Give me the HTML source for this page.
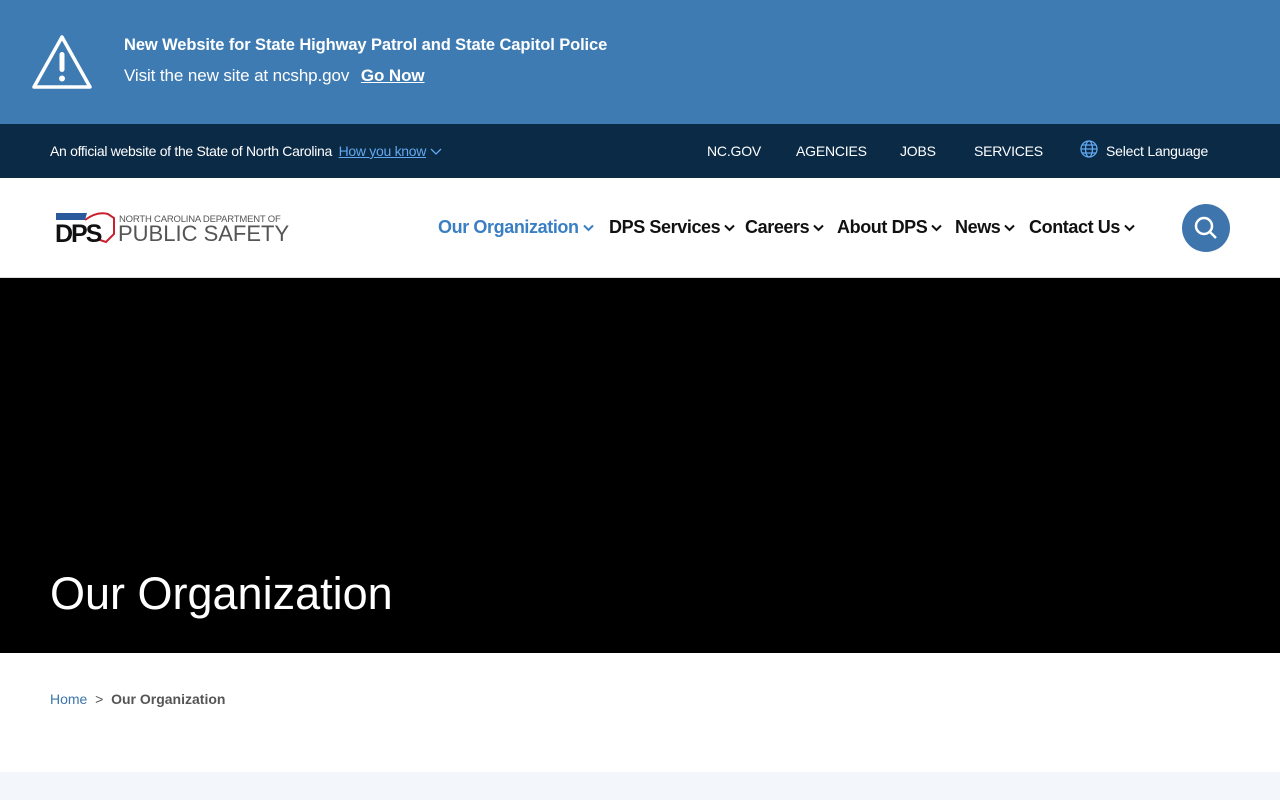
<!DOCTYPE html>
<html><head><meta charset="utf-8"><style>
*{margin:0;padding:0;box-sizing:border-box}
body{width:1280px;height:800px;overflow:hidden;font-family:"Liberation Sans",sans-serif;background:#fff}
.alert{position:absolute;top:0;left:0;width:1280px;height:124px;background:#3e7bb2;color:#fff}
.alert svg{position:absolute;left:31px;top:34px}
.a1{position:absolute;left:124px;top:36px;font-size:16.5px;font-weight:bold;letter-spacing:-.1px}
.a2{position:absolute;left:124px;top:66px;font-size:17px;letter-spacing:-.1px}
.a2 b{text-decoration:underline;margin-left:7px}
.top{position:absolute;top:124px;left:0;width:1280px;height:54px;background:#0b2a46;color:#fff;font-size:14px}
.top .l{position:absolute;left:50px;top:19px;letter-spacing:-.3px}
.top .l a{color:#62a8f0;text-decoration:underline;margin-left:3px}
.top .r{position:absolute;top:19px;font-size:14px;letter-spacing:-.2px}
.hdr{position:absolute;top:178px;left:0;width:1280px;height:100px;border-bottom:1px solid #ddd}
.nav{position:absolute;top:39px;font-size:18px;font-weight:bold;color:#111;letter-spacing:-.4px}
.nav span{position:absolute;white-space:nowrap;display:flex;align-items:center}
.nav svg{margin-left:4px}
.srch{position:absolute;left:1182px;top:26px;width:48px;height:48px;border-radius:50%;background:#3e75ac}
.hero{position:absolute;top:278px;left:0;width:1280px;height:375px;background:#000}
.hero h1{position:absolute;left:50px;top:290px;color:#fff;font-weight:normal;font-size:45px;letter-spacing:0}
.bc{position:absolute;top:691px;left:50px;font-size:14px;color:#555}
.bc a{color:#3e75ac}
.foot{position:absolute;top:772px;left:0;width:1280px;height:28px;background:#f3f7fc}
</style></head><body>
<div class="alert">
<svg width="62" height="56" viewBox="0 0 62 56"><path d="M31 3 L59 53 H3 Z" fill="none" stroke="#fff" stroke-width="3.5" stroke-linejoin="round"/><rect x="28.5" y="18" width="5" height="20" rx="2.5" fill="#fff"/><circle cx="31" cy="44.5" r="3" fill="#fff"/></svg>
<div class="a1">New Website for State Highway Patrol and State Capitol Police</div>
<div class="a2">Visit the new site at ncshp.gov <b>Go Now</b></div>
</div>
<div class="top">
<div class="l">An official website of the State of North Carolina <a>How you know</a> <svg width="12" height="8" viewBox="0 0 12 8"><path d="M1 1l5 5 5-5" fill="none" stroke="#62a8f0" stroke-width="1.3"/></svg></div>
<div class="r" style="left:707px">NC.GOV</div>
<div class="r" style="left:796px">AGENCIES</div>
<div class="r" style="left:900px">JOBS</div>
<div class="r" style="left:974px">SERVICES</div>
<svg style="position:absolute;left:1080px;top:16px" width="18" height="18" viewBox="0 0 18 18" fill="none" stroke="#62a8f0" stroke-width="1.3"><circle cx="9" cy="9" r="8"/><ellipse cx="9" cy="9" rx="3.5" ry="8"/><path d="M1 9h16M2.5 5h13M2.5 13h13"/></svg>
<div class="r" style="left:1106px">Select Language</div>
</div>
<div class="hdr">
<svg style="position:absolute;left:55px;top:34px" width="62" height="32" viewBox="0 0 62 32"><path d="M1 1 L32 1 L30 8 L1 8Z" fill="#2a5a9c"/><path d="M30 8 Q42 -1 53 2 L59 6 L59 22 L51 30 L42 27" fill="none" stroke="#c8202f" stroke-width="2"/><text x="0" y="30" font-family="Liberation Sans" font-weight="bold" font-size="25" fill="#111" letter-spacing="-2">DPS</text></svg>
<div style="position:absolute;left:119px;top:36px;font-size:9.5px;color:#555;letter-spacing:-.2px">NORTH CAROLINA DEPARTMENT OF</div>
<div style="position:absolute;left:118px;top:43px;font-size:22px;color:#555;letter-spacing:0">PUBLIC SAFETY</div>
<div class="nav">
<span style="left:438px;color:#3a7fc4">Our Organization<svg width="11" height="8" viewBox="0 0 11 8"><path d="M1 1.5l4.5 4.5 4.5-4.5" fill="none" stroke="#3a7fc4" stroke-width="2"/></svg></span>
<span style="left:609px">DPS Services<svg width="11" height="8" viewBox="0 0 11 8"><path d="M1 1.5l4.5 4.5 4.5-4.5" fill="none" stroke="#111" stroke-width="2"/></svg></span>
<span style="left:745px">Careers<svg width="11" height="8" viewBox="0 0 11 8"><path d="M1 1.5l4.5 4.5 4.5-4.5" fill="none" stroke="#111" stroke-width="2"/></svg></span>
<span style="left:837px">About DPS<svg width="11" height="8" viewBox="0 0 11 8"><path d="M1 1.5l4.5 4.5 4.5-4.5" fill="none" stroke="#111" stroke-width="2"/></svg></span>
<span style="left:955px">News<svg width="11" height="8" viewBox="0 0 11 8"><path d="M1 1.5l4.5 4.5 4.5-4.5" fill="none" stroke="#111" stroke-width="2"/></svg></span>
<span style="left:1029px">Contact Us<svg width="11" height="8" viewBox="0 0 11 8"><path d="M1 1.5l4.5 4.5 4.5-4.5" fill="none" stroke="#111" stroke-width="2"/></svg></span>
</div>
<div class="srch"><svg width="48" height="48" viewBox="0 0 48 48" fill="none" stroke="#fff" stroke-width="2.5"><circle cx="22" cy="22" r="8"/><path d="M28 28l6 6"/></svg></div>
</div>
<div class="hero"><h1>Our Organization</h1></div>
<div class="bc"><a>Home</a> &nbsp;&gt;&nbsp; <b>Our Organization</b></div>
<div class="foot"></div>
</body></html>
